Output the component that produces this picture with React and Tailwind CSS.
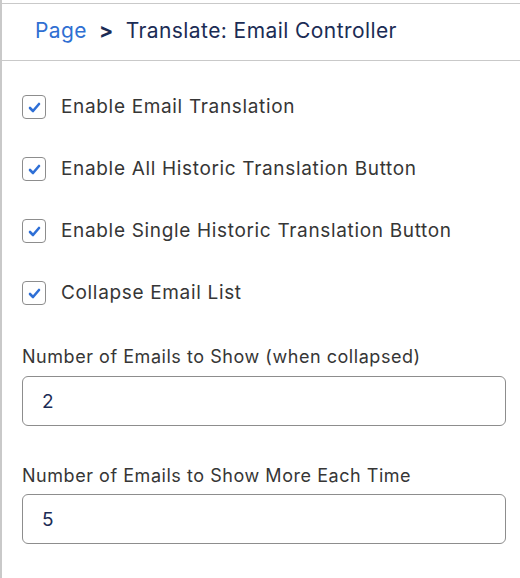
import React, { useState } from 'react';

const Check = ({ label, checked, onToggle }) => (
  <label className="flex items-center h-[24px] cursor-pointer">
    <span
      className="w-[24px] h-[24px] border border-[#8d8d8d] rounded-[4px] flex items-center justify-center bg-white"
      onClick={onToggle}
    >
      {checked && (
        <svg width="13" height="11" viewBox="0 0 13 11">
          <path d="M2 6 L5 9 L11 2" fill="none" stroke="#2e6fd6" strokeWidth="2.6" strokeLinecap="round" strokeLinejoin="round" />
        </svg>
      )}
    </span>
    <span className="ml-[15px] text-[19px] tracking-[0.035em] text-[#363636]">{label}</span>
  </label>
);

const App = () => {
  const [opts, setOpts] = useState({
    email: true,
    all: true,
    single: true,
    collapse: true,
  });
  const [collapsed, setCollapsed] = useState('2');
  const [more, setMore] = useState('5');

  const toggle = (k) => setOpts({ ...opts, [k]: !opts[k] });

  return (
    <div className="w-[520px] h-[578px] bg-white border-l-2 border-[#c9c9c9] pt-[3px]" style={{ fontFamily: 'Inter, "Noto Sans", sans-serif' }}>
      <div className="border-t border-[#c9c9c9]">
        {/* breadcrumb */}
        <div className="h-[57px] flex items-center pl-[33px] pb-[2px] border-b border-[#c9c9c9] text-[21px] tracking-[0.02em]">
          <span className="text-[#2f6fd2]">Page</span>
          <span className="mx-[12px] font-bold text-[#1b2c55]">&gt;</span>
          <span className="text-[#1b2c55]">Translate: Email Controller</span>
        </div>

        <div className="pl-[20px] pr-[14px] pt-[34px]">
          <div className="flex flex-col gap-[38px]">
            <Check label="Enable Email Translation" checked={opts.email} onToggle={() => toggle('email')} />
            <Check label="Enable All Historic Translation Button" checked={opts.all} onToggle={() => toggle('all')} />
            <Check label="Enable Single Historic Translation Button" checked={opts.single} onToggle={() => toggle('single')} />
            <Check label="Collapse Email List" checked={opts.collapse} onToggle={() => toggle('collapse')} />
          </div>

          <div className="mt-[40px]">
            <div className="text-[18px] tracking-[0.03em] text-[#363636] leading-[24px]">Number of Emails to Show (when collapsed)</div>
            <input
              className="mt-[7px] w-full h-[50px] border border-[#8d8d8d] rounded-[6px] px-[19px] text-[19px] text-[#1b2c55] outline-none"
              value={collapsed}
              onChange={(e) => setCollapsed(e.target.value)}
            />
          </div>

          <div className="mt-[38px]">
            <div className="text-[18px] tracking-[0.03em] text-[#363636] leading-[24px]">Number of Emails to Show More Each Time</div>
            <input
              className="mt-[6px] w-full h-[50px] border border-[#8d8d8d] rounded-[6px] px-[19px] text-[19px] text-[#1b2c55] outline-none"
              value={more}
              onChange={(e) => setMore(e.target.value)}
            />
          </div>
        </div>
      </div>
    </div>
  );
};

export default App;
